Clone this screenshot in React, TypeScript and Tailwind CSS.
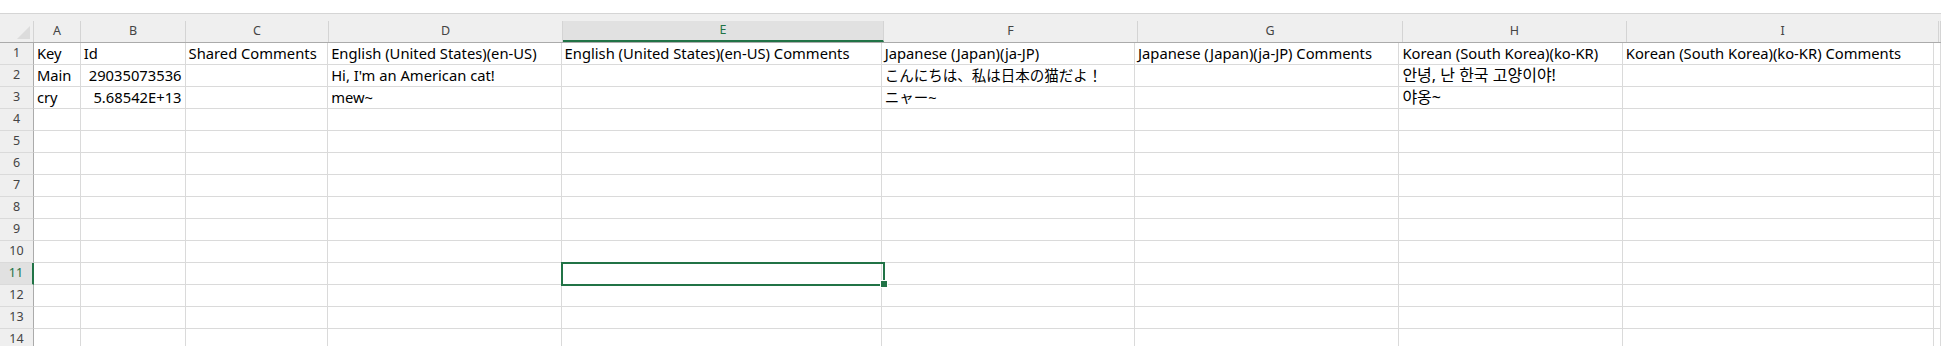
import React from 'react';

const columns = [
  { label: 'A', w: 'w-[47px]' },
  { label: 'B', w: 'w-[105px]' },
  { label: 'C', w: 'w-[143px]' },
  { label: 'D', w: 'w-[234px]' },
  { label: 'E', w: 'w-[321px]' },
  { label: 'F', w: 'w-[254px]' },
  { label: 'G', w: 'w-[265px]' },
  { label: 'H', w: 'w-[224px]' },
  { label: 'I', w: 'w-[312px]' },
  { label: '', w: 'flex-1' },
];

type Cell = { text: string; right?: boolean; lang?: 'ja' | 'ko' };

const data: Cell[][] = [
  [
    { text: 'Key' },
    { text: 'Id' },
    { text: 'Shared Comments' },
    { text: 'English (United States)(en-US)' },
    { text: 'English (United States)(en-US) Comments' },
    { text: 'Japanese (Japan)(ja-JP)' },
    { text: 'Japanese (Japan)(ja-JP) Comments' },
    { text: 'Korean (South Korea)(ko-KR)' },
    { text: 'Korean (South Korea)(ko-KR) Comments' },
  ],
  [
    { text: 'Main' },
    { text: '29035073536', right: true },
    { text: '' },
    { text: "Hi, I'm an American cat!" },
    { text: '' },
    { text: 'こんにちは、私は日本の猫だよ！', lang: 'ja' },
    { text: '' },
    { text: '안녕, 난 한국 고양이야!', lang: 'ko' },
    { text: '' },
  ],
  [
    { text: 'cry' },
    { text: '5.68542E+13', right: true },
    { text: '' },
    { text: 'mew~' },
    { text: '' },
    { text: 'ニャー~', lang: 'ja' },
    { text: '' },
    { text: '야옹~', lang: 'ko' },
    { text: '' },
  ],
];

const rowCount = 14;
const selectedRow = 11;
const selectedCol = 'E';

const font = { fontFamily: '"Noto Sans", "Noto Sans CJK KR", "Noto Sans CJK JP", sans-serif' };

const sizeFor = (cell?: Cell) =>
  cell?.lang === 'ja' ? 'text-[14.5px]' : cell?.lang === 'ko' ? 'text-[16px]' : 'text-[14.75px]';

export default function App() {
  return (
    <div className="relative h-[346px] w-[1941px] overflow-hidden bg-white text-black" style={font}>
      {/* top blank strip */}
      <div className="h-[14px] border-b border-[#d5d5d5]" />

      {/* column headers */}
      <div className="flex h-[29px] bg-[#efefef] pt-[7px] border-b border-[#ababab]">
        <div className="relative w-[34px] border-r border-[#d4d4d4]">
          <div
            className="absolute left-[17px] top-[5px] h-[13px] w-[13px] bg-[#dcdcdc]"
            style={{ clipPath: 'polygon(100% 0, 100% 100%, 0 100%)' }}
          />
        </div>
        {columns.map((c) => (
          <div
            key={c.label || 'rest'}
            className={`${c.w} flex items-center justify-center border-r border-[#d4d4d4] text-[12.5px] ${
              c.label === selectedCol
                ? 'bg-[#e1e1e1] text-[#217346] border-b-2 border-b-[#217346]'
                : 'text-[#444444]'
            }`}
          >
            {c.label}
          </div>
        ))}
      </div>

      {/* rows */}
      {Array.from({ length: rowCount }, (_, i) => {
        const n = i + 1;
        const row = data[i];
        const sel = n === selectedRow;
        return (
          <div key={n} className="flex h-[22px]">
            <div
              className={`w-[34px] flex items-center justify-center border-b border-[#dadada] text-[12.5px] ${
                sel
                  ? 'bg-[#e1e1e1] text-[#217346] border-r-2 border-r-[#217346]'
                  : 'bg-[#efefef] text-[#444444] border-r border-r-[#ababab]'
              }`}
            >
              {n}
            </div>
            {columns.map((c, j) => {
              const cell = row ? row[j] : undefined;
              return (
                <div
                  key={j}
                  className={`${c.w} flex items-end overflow-hidden whitespace-nowrap border-r border-b border-[#dadada] px-[3px] pb-[1px] leading-[19px] ${
                    cell?.right ? 'justify-end' : 'justify-start'
                  } ${sizeFor(cell)}`}
                >
                  {cell?.text}
                </div>
              );
            })}
          </div>
        );
      })}

      {/* active cell E11 */}
      <div className="absolute left-[561px] top-[262px] h-[24px] w-[324px] border-2 border-[#217346]" />
      <div className="absolute left-[880px] top-[280px] h-[8px] w-[8px] border border-white bg-[#217346]" />
    </div>
  );
}
